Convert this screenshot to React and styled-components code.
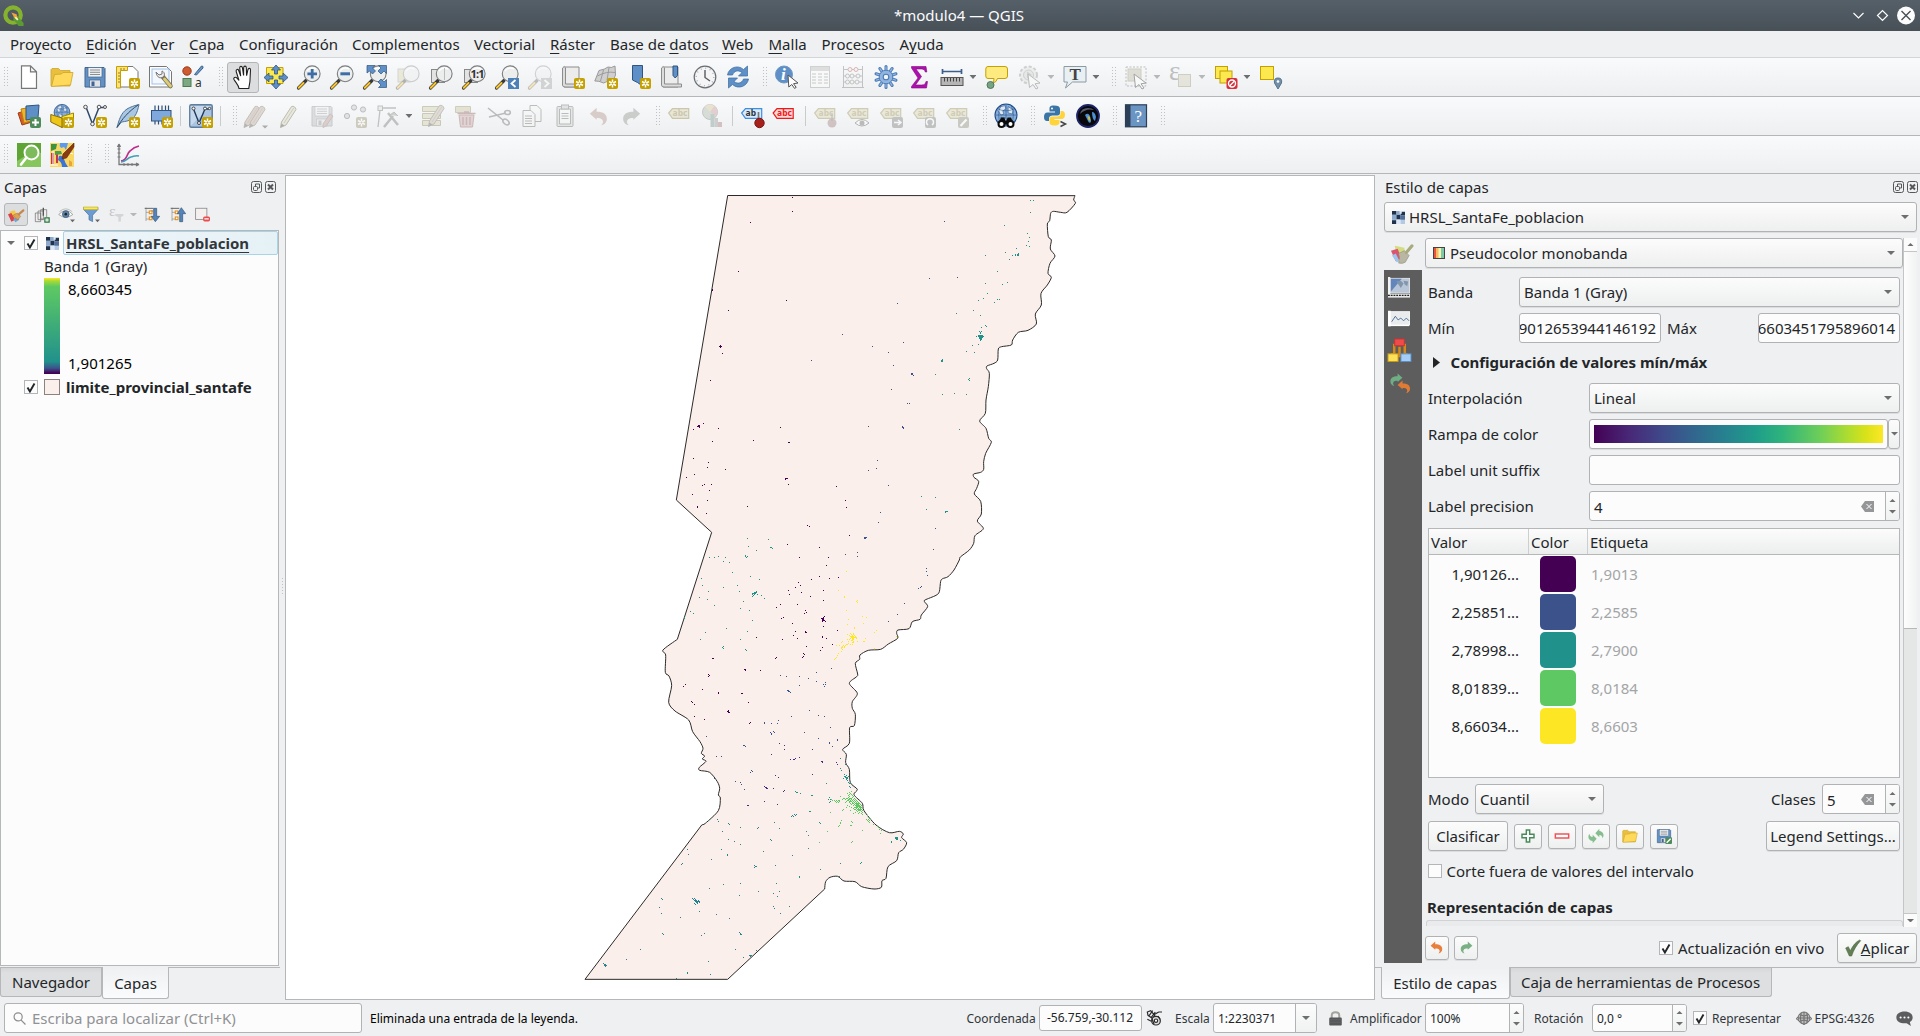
import React from "react";
import styled, { createGlobalStyle, css } from "styled-components";

const Global = createGlobalStyle`
  * { box-sizing: border-box; }
  html, body { margin: 0; padding: 0; background: #eff0f1; overflow: hidden; }
  body { font-family: "Noto Sans", "Open Sans", sans-serif; font-size: 15px; line-height: 20px; color: #232629; }
`;

/* ---------- window frame ---------- */

const Window = styled.div`
  width: 1920px;
  height: 1036px;
  display: flex;
  flex-direction: column;
  background: #eff0f1;
  white-space: nowrap;
  cursor: default;
`;

const TitleBar = styled.header`
  height: 31px;
  flex: none;
  display: grid;
  grid-template-columns: 1fr auto 1fr;
  align-items: center;
  padding: 0 5px 1px 3px;
  color: #fcfcfc;
  background: linear-gradient(#566069, #475057);
`;

const WindowButtons = styled.div`
  justify-self: end;
  display: flex;
  align-items: center;
`;

const MenuBar = styled.nav`
  height: 27px;
  flex: none;
  display: flex;
  align-items: center;
  padding-left: 10px;
  border-bottom: 1px solid #d3d5d6;
`;

const MenuEntry = styled.span`
  width: ${(p) => p.$w}px;
  u { text-underline-offset: 3px; text-decoration-thickness: 1px; text-decoration-skip-ink: none; }
`;

/* ---------- toolbars ---------- */

const ToolBar = styled.div`
  height: ${(p) => p.$h || 39}px;
  flex: none;
  display: flex;
  align-items: center;
  border-bottom: 1px solid #b4b6b8;
  background: linear-gradient(#f9fafb, #eeeff0);
`;

const GripSlot = styled.span`
  width: ${(p) => p.$w || 15.5}px;
  flex: none;
  display: flex;
  justify-content: ${(p) => (p.$first ? "center" : "flex-end")};
  padding-right: ${(p) => (p.$first ? 0 : 3)}px;
`;

const ToolSlot = styled.span`
  width: ${(p) => (p.$menu ? 45 : 33)}px;
  flex: none;
  display: flex;
  align-items: center;
  padding-left: ${(p) => (p.$active ? 1 : 4.5)}px;
`;

const ActiveTool = styled.span`
  width: 32px;
  height: 31px;
  display: grid;
  place-items: center;
  border: 1px solid #b3b5b6;
  border-radius: 3px;
  background: #dcddde;
`;

const ToolSep = styled.span`
  width: 7px;
  flex: none;
  height: 20px;
  display: flex;
  justify-content: center;
  &::after { content: ""; width: 1px; background: #c9cbcc; }
`;

/* ---------- panels ---------- */

const Main = styled.div`
  flex: none;
  height: 826px;
  display: flex;
`;

const LeftDock = styled.aside`
  width: 280px;
  flex: none;
  display: flex;
  flex-direction: column;
`;

const DockTitle = styled.div`
  height: 28px;
  flex: none;
  display: flex;
  align-items: center;
  gap: 3px;
  padding: 0 ${(p) => p.$r || 3}px 2px ${(p) => p.$l || 4}px;
  span { flex: 1; }
`;

const LayerTools = styled.div`
  height: 28px;
  flex: none;
  display: flex;
  align-items: flex-start;
  padding: 1px 0 0 4px;
`;

const LayerTool = styled.span`
  width: ${(p) => p.$w || 25}px;
  height: 23px;
  display: flex;
  align-items: center;
  justify-content: center;
`;

const LayerToolOn = styled(LayerTool)`
  width: 24px;
  margin-right: 1px;
  border: 1px solid #b3b5b6;
  border-radius: 3px;
  background: #dcddde;
`;

const Tree = styled.div`
  height: 736px;
  flex: none;
  display: flex;
  flex-direction: column;
  width: 279px;
  border: 1px solid #b5b7b9;
  background: #fcfcfc;
`;

const LayerRow = styled.div`
  height: ${(p) => p.$h || 24}px;
  flex: none;
  display: flex;
  align-items: center;
  font-weight: bold;
`;

const Expander = styled.span`
  width: 23px;
  display: flex;
  align-items: center;
  padding-left: 6px;
`;

const LayerIcon = styled.span`
  width: 19px;
  margin-left: 6px;
  display: flex;
  align-items: center;
  padding-left: ${(p) => p.$l || 0}px;
`;

const SelectedName = styled.span`
  flex: 1;
  height: 24px;
  line-height: 23px;
  padding-left: 2px;
  border: 1px solid #a9d3e6;
  border-radius: 2px;
  background: linear-gradient(90deg, #edf5f9, #e6f1f6);
  color: #31363b;
  text-decoration: underline;
  text-underline-offset: 3px;
  text-decoration-thickness: 1px;
  text-decoration-skip-ink: none;
`;

const LayerName = styled.span`
  padding-left: 3px;
`;

const BandName = styled.div`
  height: 23px;
  line-height: 23px;
  padding-left: 43px;
  flex: none;
`;

const Legend = styled.div`
  display: flex;
  height: 96px;
  flex: none;
  padding-left: 43px;
`;

const LegendRamp = styled.div`
  width: 16px;
  background: linear-gradient(#fde725 0%, #a8db34 3%, #5ec962 9%, #21918c 87%, #3b528b 94%, #440154 99%);
`;

const LegendLabels = styled.div`
  display: flex;
  flex-direction: column;
  justify-content: space-between;
  padding: 1px 0 1px 8px;
  color: #000;
`;

const Swatch = styled.span`
  width: 16px;
  height: 16px;
  border: 1px solid #8b8280;
  background: #faefea;
`;

const Tabs = styled.div`
  display: flex;
  align-items: flex-start;
  margin-top: ${(p) => p.$mt}px;
  border-top: 1px solid #b5b7b9;
  padding-left: ${(p) => p.$l || 0}px;
  height: 32px;
`;

const Tab = styled.span`
  width: ${(p) => p.$w}px;
  text-align: center;
  border: 1px solid #b5b7b9;
  border-top: 0;
  border-radius: 0 0 3px 3px;
  ${(p) =>
    p.$on
      ? css`
          height: 32px;
          line-height: 33px;
          margin-top: -1px;
          background: linear-gradient(#eff0f1, #fafbfc);
        `
      : css`
          height: 29px;
          line-height: 29px;
          background: linear-gradient(#d5d6d8 0, #dddfe0 5px);
        `}
`;

const Splitter = styled.div`
  width: 5px;
  flex: none;
  display: flex;
  align-items: center;
  justify-content: center;
`;

const Canvas = styled.main`
  width: 1090px;
  height: 825px;
  margin-top: 1px;
  flex: none;
  border: 1px solid #b5b7b9;
  background: #fff;
  svg { display: block; }
`;

/* ---------- form controls ---------- */

const frame = css`
  border: 1px solid #b0b2b4;
  border-radius: 3px;
`;

const Combo = styled.div`
  ${frame}
  width: ${(p) => p.$w}px;
  height: 30px;
  flex: none;
  display: flex;
  align-items: center;
  gap: 4px;
  padding: 0 7px 0 ${(p) => p.$pl || 4}px;
  margin-left: ${(p) => p.$ml || 0}px;
  background: linear-gradient(#fcfcfc, #eeefef);
  box-shadow: 0 1px 0 #dcdddf;
  span { flex: 1; }
`;

const Field = styled.div`
  ${frame}
  width: ${(p) => p.$w}px;
  height: ${(p) => p.$h || 30}px;
  flex: none;
  display: flex;
  align-items: center;
  overflow: hidden;
  padding: 0 ${(p) => p.$pr || 4}px 0 ${(p) => p.$pl || 0}px;
  justify-content: ${(p) => (p.$end ? "flex-end" : "flex-start")};
  background: #fcfcfc;
  color: ${(p) => (p.$muted ? "#909294" : "#232629")};
`;

const SpinBox = styled(Field)`
  padding: 0 0 0 ${(p) => p.$pl || 4}px;
  & > span { flex: 1; padding-top: 1px; }
`;

const SpinArrows = styled.div`
  width: ${(p) => p.$w || 14}px;
  height: 100%;
  margin-left: ${(p) => p.$ml || 0}px;
  display: flex;
  flex-direction: column;
  align-items: center;
  justify-content: center;
  gap: 8px;
  border-left: 1px solid #b0b2b4;
  background: linear-gradient(#fcfcfc, #f0f1f1);
`;

const Button = styled.div`
  ${frame}
  width: ${(p) => p.$w}px;
  height: ${(p) => p.$h || 30}px;
  flex: none;
  display: flex;
  align-items: center;
  justify-content: center;
  background: linear-gradient(#fcfcfc, #eeefef);
  box-shadow: 0 1px 0 #dcdddf;
`;

const Box = styled.span`
  width: 14px;
  height: 14px;
  flex: none;
  display: grid;
  place-items: center;
  margin-left: ${(p) => p.$ml || 0}px;
  border: 1px solid #b3b5b6;
  background: #fcfcfc;
`;

/* ---------- style dock ---------- */

const RightDock = styled.aside`
  flex: 1;
  display: flex;
  flex-direction: column;
`;

const StyleBody = styled.div`
  display: flex;
  height: 725px;
  margin: 6px 0 0 9px;
`;

const StyleSide = styled.div`
  width: 38px;
  margin-right: 3px;
  display: flex;
  flex-direction: column;
`;

const SideFirst = styled.div`
  height: 32px;
  padding: 4px 0 0 6px;
`;

const SideDark = styled.div`
  flex: 1;
  display: flex;
  flex-direction: column;
  padding: 7px 0 0 4px;
  background: #5d5d5d;
  gap: 9px;
`;

const StyleColumn = styled.div`
  width: 492px;
  display: flex;
  flex-direction: column;
`;

const ScrollArea = styled.div`
  height: 689px;
  display: flex;
`;

const Form = styled.div`
  width: 478px;
  display: flex;
  flex-direction: column;
`;

const FormRow = styled.div`
  display: flex;
  align-items: center;
  margin: ${(p) => p.$mt}px 3px 0 3px;
  height: ${(p) => p.$h || 30}px;
  flex: none;
`;

const BoldRow = styled(FormRow)`
  font-weight: bold;
  padding-bottom: 2px;
  margin-left: ${(p) => p.$l || 3}px;
`;

const Label = styled.label`
  width: ${(p) => p.$w}px;
  flex: none;
  padding-left: ${(p) => p.$l || 0}px;
`;

const Fill = styled.span`
  flex: 1;
  padding-left: ${(p) => p.$l || 0}px;
`;

const RampField = styled(Button)`
  padding: 5px 4px;
  background: #fcfcfc;
`;

const Ramp = styled.div`
  width: 100%;
  height: 18px;
  background: linear-gradient(90deg, #440154, #482777 12%, #3f4a8a 24%, #31678e 35%, #26838f 46%, #1f9d8a 56%, #2eb37c 65%, #6cce5a 78%, #b6de2b 89%, #d8e219 94%, #fde725);
`;

const ClassTable = styled.div`
  margin: 7px 3px 0;
  height: 250px;
  flex: none;
  border: 1px solid #b5b7b9;
  background: #fcfcfc;
`;

const ClassGrid = styled.div`
  display: grid;
  grid-template-columns: 100px 59px 1fr;
  align-items: center;
`;

const ClassHead = styled(ClassGrid)`
  height: 26px;
  background: linear-gradient(#fcfcfc, #eceded);
  border-bottom: 1px solid #b5b7b9;
  span { line-height: 27px; height: 25px; padding-left: 2px; border-right: 1px solid #ccced0; }
  span:last-child { border: 0; }
`;

const ClassRow = styled(ClassGrid)`
  height: 38px;
  span:first-child { text-align: right; padding-right: 10px; }
  span:last-child { color: #a3a5a7; padding-left: 3px; }
`;

const ClassColor = styled.i`
  width: 36px;
  height: 36px;
  margin: 0 0 0 11px;
  border-radius: 5px;
  background: ${(p) => p.$c};
`;

const ButtonRow = styled(FormRow)`
  gap: 6px;
`;

const GroupTop = styled.div`
  height: 6px;
  margin: 1px 0 0 1px;
  border: 1px solid #d0d2d3;
  border-bottom: 0;
  border-radius: 3px 3px 0 0;
  background: #eaebec;
`;

const ScrollBar = styled.div`
  width: 14px;
  display: flex;
  flex-direction: column;
  border-left: 1px solid #c3c5c6;
  background: #e5e7e7;
`;

const ScrollButton = styled.div`
  height: 14px;
  display: grid;
  place-items: center;
  background: #fbfbfb;
  border-bottom: ${(p) => (p.$up ? "1px solid #c3c5c6" : 0)};
  border-top: ${(p) => (p.$up ? 0 : "1px solid #c3c5c6")};
`;

const ScrollHandle = styled.div`
  height: 377px;
  margin-bottom: auto;
  border-bottom: 1px solid #b5b7b9;
  background: linear-gradient(90deg, #fdfdfd, #f1f2f2);
`;

const StyleFooter = styled.div`
  height: 36px;
  display: flex;
  align-items: center;
  gap: 5px;
  padding-top: 6px;
`;

/* ---------- status bar ---------- */

const StatusBar = styled.footer`
  height: 36px;
  display: flex;
  align-items: center;
  padding-left: 4px;
  font-size: 12px;
`;

const StatusText = styled.span`
  width: ${(p) => p.$w}px;
  flex: none;
  padding-left: ${(p) => p.$l || 0}px;
  padding-top: ${(p) => p.$t || 0}px;
  color: ${(p) => (p.$dark ? "#000" : "#31363b")};
  svg { display: block; }
`;

const Locator = styled(Field)`
  font-size: 15px;
  gap: 6px;
`;

/* ---------- small glyphs ---------- */

const Tri = ({ up, s = 8, c = "#6c6e70" }) => (
  <svg width={s} height={s / 2} viewBox="0 0 8 4">
    <path d={up ? "M0 4h8L4 0z" : "M0 0h8L4 4z"} fill={c} />
  </svg>
);

const Grip = ({ h = 21, one }) => (
  <svg width={one ? 1 : 4} height={h} shapeRendering="crispEdges">
    {Array.from({ length: Math.ceil(h / 3) }, (_, i) => (
      <g key={i} fill="#bfc1c2">
        <rect x="0" y={i * 3} width="1" height="1" />
        {!one && <rect x="3" y={i * 3} width="1" height="1" />}
      </g>
    ))}
  </svg>
);

const Check = () => (
  <svg width="10" height="11" viewBox="0 0 10 11">
    <path d="M1.500 5.500l2.400 4L8.500 1.500" fill="none" stroke="#232629" strokeWidth="1.900" />
  </svg>
);

const Clear = () => (
  <svg width="13" height="11" viewBox="0 0 13 11">
    <path d="M4 0h9v11H4L0 5.500z" fill="#949698" />
    <path d="M5.500 3l5 5M10.500 3l-5 5" stroke="#fff" strokeWidth="1" />
  </svg>
);

const Float = () => (
  <svg width="11" height="12" viewBox="0 0 11 12" fill="none" stroke="#55585b">
    <rect x=".5" y=".5" width="10" height="11" rx="2" />
    <path d="M4.500 5V3h4v4h-2" />
    <rect x="2.500" y="5.500" width="4" height="4" rx="1" />
  </svg>
);

const Close = () => (
  <svg width="11" height="12" viewBox="0 0 11 12" fill="none" stroke="#55585b">
    <rect x=".5" y=".5" width="10" height="11" rx="2" />
    <path d="M3 3.500l5 5M8 3.500l-5 5" strokeWidth="2" />
  </svg>
);

const Spin = ({ ml }) => (
  <SpinArrows $ml={ml}>
    <Tri up s={7} />
    <Tri s={7} />
  </SpinArrows>
);

/* ---------- toolbar icons, drawn on a 24 by 24 grid ---------- */

const badge = (bg = "#c4a000") => (
  <g>
    <rect x="13" y="13" width="11" height="11" rx="2" fill={bg} />
    <path d="M18.500 14.500v8M15 16.500l7 4M22 16.500l-7 4" stroke="#fff" strokeWidth="1.500" />
    <circle cx="18.500" cy="18.500" r="1" fill={bg} />
  </g>
);
const star = badge();

const lens = (
  <g>
    <path d="M1.500 23L9 15.500" stroke="#3a3a3a" strokeWidth="3.200" strokeLinecap="round" />
    <path d="M1.800 22.700L6.500 18" stroke="#fcc629" strokeWidth="2" strokeLinecap="round" />
    <circle cx="15.200" cy="8.800" r="7.900" fill="#eceded" stroke="#7b7d7e" strokeWidth="1.100" />
    <path d="M10 6a6.500 6.500 0 0 1 9-2" stroke="#fff" strokeWidth="1.500" fill="none" />
  </g>
);

const disk = (body, edge, line) => (
  <g>
    <path d="M2 2.500h19l1 1V22H2z" fill={body} stroke={edge} />
    <rect x="5" y="2.500" width="14" height="9.500" fill="#eef0f2" stroke={edge} strokeWidth=".7" />
    <path d="M7 5h10M7 7.300h10M7 9.500h10" stroke={line} />
    <rect x="6.500" y="15" width="11" height="7" fill="#dfe3e8" stroke={edge} strokeWidth=".7" />
    <rect x="8.500" y="16.500" width="3" height="4.500" fill={edge} />
  </g>
);
const flop = disk("#6291c6", "#42658f", "#8b8d8f");
const folder = (
  <g stroke="#caa62d" strokeWidth=".8">
    <path d="M1 21V4.500l1-1h6.500l2 2H20V21z" fill="#e9bf3d" />
    <path d="M1.500 21.500L4.500 9.500l7-.5 1.500-1.500h10L20.500 20l-7 .5z" fill="#ffd95c" />
  </g>
);
const pencil = (fill = "#d3cca4", tip = "#6b6b60") => (
  <g>
    <path d="M4.500 18L14.500 2.500q3.500-1 4.500 3L9 21l-5.500 2.500z" fill={fill} stroke="#85836f" />
    <path d="M7 19L17 3.500" stroke="#a5a188" />
    <path d="M4.500 19.500l3 2-4 2z" fill={tip} />
  </g>
);
const abcTag = (c = "#a39a66", f = "#ddd9b8", t = "abc", ink = c) => (
  <g transform="translate(0 4)">
    <path d="M.7 5L4.500.6h16.200v9.800H4.500z" fill={f} stroke={c} strokeWidth="1.200" />
    <text x="4.600" y="8.300" fontFamily="Noto Sans" fontSize="8.500" fontWeight="bold" fill={ink}>{t}</text>
  </g>
);
const sq = (x, y, s, f = "#fce94f", c = "#c4a000") => <rect x={x} y={y} width={s} height={s} fill={f} stroke={c} />;
const curl = (f) => <path d="M1 8l8-7v4.500c8 0 12 3 12 8.500 0 4-3 6.500-6.500 7.500 2-2.500 2.500-4 1.500-6-1-1.800-3-2.500-7-2.500V15z" fill={f} />;
const cursor = <path d="M10 9l12 9-5 .8 3 4.200-2 1-3-4.500-3.500 3z" fill="#fff" stroke="#555" />;
const paper = (
  <g>
    <path d="M3 2h15v20H3z" fill="#ececec" stroke="#8c8c8c" />
    <path d="M1.500 3q2-3 3 0v16h17v3H4q-2.500 0-2.500-2z" fill="#dcdcdc" stroke="#8c8c8c" />
  </g>
);
const earth = (
  <g>
    <circle cx="12" cy="11" r="10.500" fill="#86aedb" stroke="#204a87" />
    <path d="M4 6q3-4 7-4l1 3-3 2 1 3-3 1zM14 3l5 3-1 4-4-1zM7 13l5 1 1 4-3 2z" fill="#dbe7f3" stroke="#35608f" strokeWidth=".6" />
    <path d="M2 11h20M12 1v20M4 5q8 4 16 0M7 2q-4 9 0 18M17 2q4 9 0 18" stroke="#204a87" strokeWidth=".5" fill="none" />
  </g>
);

const I = {
  new: <path d="M4.500 .8h9l6 6v16.500h-15z M13.500 .8v6h6" fill="#fff" stroke="#777" strokeWidth="1.200" />,
  open: folder,
  save: flop,
  layoutNew: (
    <g>
      <path d="M4 1.500h13l5 5V22H4z" fill="#fff" stroke="#777" />
      <path d="M.5 1.500h11v4h-7V23h-4z" fill="#fbe27a" stroke="#c4a000" />
      <path d="M2 8h2M2 11h2M2 14h2M2 17h2M5 3v2M8 3v2" stroke="#9c8200" />
      {star}
    </g>
  ),
  layouts: (
    <g>
      <path d="M.5 1.500h17l5 5V22H.5z" fill="#fff" stroke="#777" />
      <rect x="3" y="4" width="17" height="15" fill="#f4f8fd" stroke="#9fc0ea" />
      <path d="M14 12l7.500 9" stroke="#7d7450" strokeWidth="4.500" strokeLinecap="round" />
      <path d="M15.500 14l6 7" stroke="#dccb7b" strokeWidth="2.800" strokeLinecap="round" />
      <path d="M7 7l3 3 3-1 0-3c3 1 3 5 1 6-2 1.500-6 1.500-7-5z" fill="#eee" stroke="#777" />
    </g>
  ),
  styleMgr: (
    <g>
      <circle cx="5" cy="6" r="4.200" fill="#cf5b31" stroke="#9c3b18" />
      <path d="M12.500 9.500L19.500 1q2-.3 1.500 2L14.500 10z" fill="#6d97c4" stroke="#3a6491" />
      <rect x="1" y="13.500" width="8" height="8" fill="#7da982" stroke="#4d7a52" />
      <text x="13" y="22" fontFamily="Noto Sans" fontSize="12" fill="#333">a</text>
    </g>
  ),
  hand: (
    <path d="M8 23.500C7.500 20 5 18 3 14.500 2 12.500 4.500 11.500 6 13.200L8 15.500 5.200 6.500C4.700 4.300 7 3.700 7.700 5.500L9.700 11 8.700 3C8.600 1 11 .8 11.400 2.700L12.600 10.500 12.700 2.500C12.900.6 15.200.7 15.300 2.700L15.600 10.700 17 4.500C17.500 2.700 19.700 3.200 19.500 5L19 15C19 18.500 18 20.500 17.800 23.500z" fill="#fff" stroke="#222" strokeWidth="1.100" />
  ),
  pan: (
    <g>
      <path d="M2.500 2.500H19v16H2.500z" fill="#fce94f" stroke="#c4a000" />
      <g fill="#5e8fc6" stroke="#2f5580" strokeWidth=".8">
        <path d="M12 0l4.500 5H13.500v4h-3V5H7.500z" />
        <path d="M12 24l4.500-5H13.500v-4h-3v4H7.500z" />
        <path d="M0 12.500l5-4.500v3h4v3H5v3z" />
        <path d="M24 12.500L19 8v3h-4v3h4v3z" />
      </g>
    </g>
  ),
  zoomIn: <g>{lens}<path d="M15.200 4v9.600M10.400 8.800h9.600" stroke="#3e6ea5" strokeWidth="2.800" /></g>,
  zoomOut: <g>{lens}<path d="M10.400 8.800h9.600" stroke="#3e6ea5" strokeWidth="3" /></g>,
  zoomFull: (
    <g>
      {lens}
      <g fill="#5e8fc6" stroke="#2f5580" strokeWidth=".7">
        <path d="M4 .5h8L9.500 3l3 3-3 3-3-3L4 8z" />
        <path d="M23.500 .5v8L21 6l-3 3-3-3 3-3L15.500.5z" />
        <path d="M23.500 22.500h-8L18 20l-3-3 3-3 3 3 2.500-2.500z" />
      </g>
    </g>
  ),
  zoomSel: <g opacity=".35"><rect x="2" y="4" width="12" height="13" fill="#d7d3a0" stroke="#999" />{lens}</g>,
  zoomLayer: <g><rect x="2.500" y="4.500" width="13" height="13" fill="#e3e3e3" stroke="#888" />{lens}<path d="M15.500 3v12" stroke="#bbb" /></g>,
  zoomOne: (
    <g>
      <rect x="2.500" y="4.500" width="13" height="13" fill="#e3e3e3" stroke="#888" />
      {lens}
      <text x="8.500" y="13" fontFamily="Noto Sans" fontSize="11" fontWeight="bold" fill="#333" textLength="14">1:1</text>
    </g>
  ),
  zoomLast: <g>{lens}<rect x="13" y="13" width="11" height="11" fill="#4e80b8" /><path d="M20.500 15l-4 3.500 4 3.500" stroke="#fff" strokeWidth="1.800" fill="none" /></g>,
  zoomNext: <g opacity=".3">{lens}<rect x="13" y="13" width="11" height="11" fill="#8a8a8a" /><path d="M16.500 15l4 3.500-4 3.500" stroke="#fff" strokeWidth="1.800" fill="none" /></g>,
  mapNew: <g>{paper}{star}</g>,
  map3d: <g><path d="M.8 16L5 5.500q6-1 9-3.500 3 1.500 7-1l.5 9q-2 3-1 6-7-1-11 2-5-2.500-8.700-2z" fill="#cfcfcf" stroke="#999" /><path d="M3.500 11q9-5 17.500-3.500M9.500 5l-3 11M15 2.500l-2 13" stroke="#9c9c9c" fill="none" />{star}</g>,
  bookNew: <g><path d="M5.500 .5h10V21l-5-3.500-5-2.500z" fill="#5e8fc6" stroke="#2f5580" />{star}</g>,
  books: <g>{paper}<path d="M13 1h4.500V10.500L15.200 13 13 10.500z" fill="#5e8fc6" stroke="#2f5580" /></g>,
  clock: (
    <g>
      <circle cx="12" cy="12" r="10.800" fill="#f5f5f5" stroke="#6b6d6e" strokeWidth="1.200" />
      <circle cx="12" cy="12" r="8.800" fill="none" stroke="#9cb8d8" strokeDasharray="1 3.600" strokeWidth="1.500" />
      <path d="M12 5v7.500l5 3.500" fill="none" stroke="#5a5c5e" strokeWidth="1.400" />
    </g>
  ),
  refresh: (
    <g fill="#5e8fc6" stroke="#3a6aa0" strokeWidth=".7">
      <path d="M1.500 10c1-7 10-11 16-5.500L21.500 1v10h-9l3.500-3.500C12 4.500 8 6 6.500 10z" />
      <path d="M22.500 14c-1 7-10 11-16 5.500L2.500 23V13h9L8 16.500c4 3 8 1.500 9.500-2.500z" />
    </g>
  ),
  identify: (
    <g>
      <circle cx="9" cy="9.500" r="8.500" fill="#5e8fc6" stroke="#6d97c4" />
      <text x="6" y="15" fontFamily="Liberation Serif" fontSize="17" fontWeight="bold" fontStyle="italic" fill="#fff">i</text>
      <path d="M13 10l10 8-4.500.7 2.700 3.700-1.700 1-2.700-3.900-3 2.500z" fill="#fff" stroke="#555" />
    </g>
  ),
  table: (
    <g opacity=".4">
      <rect x="2.500" y="1.500" width="19" height="21" fill="#fff" stroke="#999" />
      <rect x="3" y="2" width="18" height="4" fill="#bbb" />
      <path d="M4 9h4M10 9h4M16 9h4M4 12h4M10 12h4M16 12h4M4 15h4M10 15h4M16 15h4M4 18h4M10 18h4M16 18h4" stroke="#888" />
    </g>
  ),
  abacus: (
    <g opacity=".45" fill="none" stroke="#888">
      <path d="M2.500 1v22M21.500 1v22M2.500 4.500h19M2.500 11h19M2.500 17h19M1 22.500h22" />
      <g fill="#f3f3f3"><circle cx="9" cy="4.500" r="2" stroke="#b66" /><circle cx="15" cy="4.500" r="2" stroke="#b66" /><circle cx="6.500" cy="11" r="2" /><circle cx="11" cy="11" r="2" /><circle cx="17" cy="11" r="2" /><circle cx="6.500" cy="17" r="2" /><circle cx="11" cy="17" r="2" /><circle cx="16" cy="17" r="2" /></g>
    </g>
  ),
  gear: (
    <g>
      {Array.from({ length: 10 }, (_, i) => <path key={i} d="M12 1.500v5" stroke="#4a7ab5" strokeWidth="3" strokeLinecap="round" transform={`rotate(${i * 36} 12 12)`} />)}
      {Array.from({ length: 10 }, (_, i) => <path key={i} d="M12 1.800v5" stroke="#8fb4e0" strokeWidth="1.300" strokeLinecap="round" transform={`rotate(${i * 36} 12 12)`} />)}
      <circle cx="12" cy="12" r="6.800" fill="#8fb4e0" stroke="#4a7ab5" strokeWidth=".9" />
      <circle cx="12" cy="12" r="2.800" fill="#f3f6f9" stroke="#4a7ab5" strokeWidth="1.100" />
    </g>
  ),
  sigma: <path d="M4.500 1.500h14.500l.8 5.500h-1.500c-.5-2-1.500-3-4-3H9l5.500 7.500L8.500 20h6c3 0 4-1 4.500-3.500h1.500l-1 6.500h-15v-1.500L11 13 4.500 3z" fill="#b00fb0" stroke="#7d0a7d" strokeWidth=".6" />,
  measure: (
    <g>
      <path d="M2.500 6.500h19M2.500 4v5M21.500 4v5" stroke="#3b5f8a" strokeWidth="1.700" />
      <rect x="1" y="12.500" width="22" height="8" fill="#b5b5b5" stroke="#555" />
      <path d="M4.500 13v3.500M7.500 13v3.500M10.500 13v3.500M13.500 13v3.500M16.500 13v3.500M19.500 13v3.500" stroke="#444" />
    </g>
  ),
  tip: (
    <g>
      <path d="M3 1.500h17q2.500 0 2.500 2.500v7q0 2.500-2.500 2.500h-7.500Q12 17 7 18.500q2.500-2.500 2-5H3Q.8 13.500.8 11V4Q.8 1.500 3 1.500z" fill="#fdeb80" stroke="#c4a000" />
      <circle cx="5.500" cy="20" r="3.500" fill="#77a382" stroke="#4f7a5a" />
    </g>
  ),
  action: <g opacity=".35"><circle cx="10.500" cy="10" r="8.500" fill="#ddd" stroke="#888" strokeWidth="2" strokeDasharray="3 2" /><circle cx="10.500" cy="10" r="5" fill="#ccc" stroke="#888" /><path d="M9 6.500l5 3.500-5 3.500z" fill="#888" />{cursor}</g>,
  text: (
    <g>
      <path d="M1 1.500h22v15.500H9.500L2.500 23l2-6H1z" fill="#e8f0f4" stroke="#8b9aa3" />
      <text x="6.500" y="15" fontFamily="Liberation Serif" fontSize="17" fontWeight="bold" fill="#444">T</text>
    </g>
  ),
  select: <g opacity=".5"><rect x="2" y="2" width="20" height="19" fill="none" stroke="#888" strokeDasharray="2 1.500" /><rect x="4" y="4" width="13" height="12" fill="#c9c7b6" stroke="#aaa88f" />{cursor}</g>,
  epsilon: <g opacity=".5"><text x="0" y="15" fontFamily="Liberation Serif" fontSize="27" fill="#888">ε</text><rect x="9.500" y="9.500" width="12" height="12" fill="#d9d7c5" stroke="#aaa88f" /></g>,
  deselect: (
    <g>
      {sq(1.500, 1.500, 12)}
      {sq(6, 6, 12)}
      <rect x="12.500" y="13" width="11" height="11" rx="2" fill="#d6303c" />
      <circle cx="18" cy="18.500" r="3.500" fill="none" stroke="#fff" strokeWidth="1.400" />
      <path d="M15.800 20.800l4.500-4.500" stroke="#fff" strokeWidth="1.300" />
    </g>
  ),
  location: (
    <g>
      {sq(1.500, 1.500, 13)}
      <path d="M19 24l-3.500-6q-1-5 3.500-5t3.500 5z" fill="#7390a8" stroke="#56748d" />
      <circle cx="19" cy="16.500" r="1.300" fill="#fff" />
    </g>
  ),
  addSource: (
    <g>
      <path d="M1 9l10-3 4 12-10 3z" fill="#d95b2c" stroke="#a03f18" />
      <path d="M4 5l11-2 2 13-10 3z" fill="#f0b429" stroke="#b98308" />
      <path d="M9 2l13-1-1 13-12 2z" fill="#5e8fc6" stroke="#2f5580" />
      <rect x="13" y="13" width="11" height="11" rx="2" fill="#4f8a5b" />
      <path d="M18.500 15v7M15 18.500h7" stroke="#fff" strokeWidth="2" />
    </g>
  ),
  gpkg: (
    <g>
      <g transform="translate(3 0) scale(.75)">{earth}</g>
      <path d="M12 12.500L23.500 9v9L12 23.500z" fill="#fce94f" stroke="#a68500" />
      <path d="M.8 10.500L12 14v9.500L.8 18z" fill="#eec61a" stroke="#8a6d00" />
      {star}
    </g>
  ),
  vector: (
    <g>
      <path d="M3 3l6.500 17L16 3.500h6" fill="none" stroke="#2d4a6b" strokeWidth="1.500" />
      <g fill="#f4f4f4" stroke="#555"><circle cx="2.500" cy="3" r="1.800" /><circle cx="9.500" cy="20" r="1.800" /><circle cx="16" cy="3" r="1.800" /><circle cx="22" cy="3" r="1.500" /></g>
      {star}
    </g>
  ),
  feather: (
    <g>
      <path d="M1 23.500C3 16 5 9 11 5c3-2 8-3.500 12-4.500-1 4-1.500 8-4.500 12C15 17 9 17.500 5.500 18z" fill="#a9c6e2" stroke="#4f7396" />
      <path d="M1 23.500C6 15 12 8 22 1" stroke="#2c4c70" fill="none" />
      {star}
    </g>
  ),
  chip: (
    <g>
      <path d="M6 1.500v19M9.500 1.500v19M13 1.500v19M16.500 1.500v19M19.500 1.500v19" stroke="#2f4f78" strokeWidth="1.200" />
      <rect x="2.500" y="6.500" width="19.500" height="10.500" fill="#7fa9dc" stroke="#2f5580" />
      {star}
    </g>
  ),
  vlayer: (
    <g>
      <rect x=".8" y=".8" width="22.400" height="22.400" rx="1.500" fill="#a9c3e0" stroke="#5f7d9e" strokeWidth="1.500" />
      <path d="M1.500 2v20L22 2z" fill="#dbe7f3" opacity=".6" />
      <path d="M4.500 5l5.500 14L16 5h4" fill="none" stroke="#1f3a5c" strokeWidth="1.400" />
      <g fill="#fff" stroke="#444"><circle cx="4.500" cy="4.500" r="1.500" /><circle cx="10" cy="19" r="1.500" /><circle cx="16" cy="4.500" r="1.500" /><circle cx="20.500" cy="4.500" r="1.200" /></g>
      {star}
    </g>
  ),
  edits: <g opacity=".45"><g transform="translate(-3.500 0)">{pencil("#c5aca4")}</g><g transform="translate(2 0)">{pencil("#c9b2aa")}</g><path d="M18 21.500h6l-3 3z" fill="#555" /></g>,
  pencil: <g opacity=".5">{pencil("#dedcc4")}</g>,
  saveEdits: <g opacity=".4">{disk("#b9bbbd", "#8c8e90", "#999")}<path d="M13 20L20 10l3 2-7 10-3 1.500z" fill="#bd9890" stroke="#8f7a74" /></g>,
  addPoint: <g opacity=".45"><circle cx="4" cy="12" r="2.600" fill="#ccc" stroke="#777" /><circle cx="11" cy="3.500" r="2.600" fill="#ccc" stroke="#777" /><circle cx="20" cy="5.500" r="2.600" fill="#ccc" stroke="#777" />{badge("#a19c7c")}</g>,
  vertex: <g opacity=".4" fill="none" stroke="#777"><path d="M6 4h14M4 6L2 23" strokeWidth="1.300" /><rect x="2" y="2" width="4.500" height="4.500" fill="#ddd" /><path d="M8 23L17 12M12 9l10 12" strokeWidth="2.500" /><path d="M14 11l4-3 4 4" fill="#999" /></g>,
  formEdit: <g opacity=".45"><path d="M1.500 2.500h18v5h-18zM1.500 9.500h18v5h-18zM1.500 16.500h18v5h-18z" fill="#d6d3b4" stroke="#99966f" /><g transform="translate(4 -1)">{pencil("#c9bdb0")}</g></g>,
  trash: <g opacity=".42"><path d="M1.500 2.500h15v6h-15z" fill="#c9c6a2" stroke="#99966f" /><path d="M5 11h15l-1.500 12h-12z" fill="#caa" stroke="#966" /><path d="M3.500 9.500h18M10 8h5M9 13v8M12.500 13v8M16 13v8" stroke="#966" strokeWidth="1.500" /></g>,
  cut: <g opacity=".45" fill="none" stroke="#777" strokeWidth="1.600"><path d="M1 4l15 12M2 13l17-4" /><ellipse cx="19" cy="18" rx="3.500" ry="2.300" transform="rotate(40 19 18)" /><ellipse cx="20.500" cy="8.500" rx="2.800" ry="2" /></g>,
  copy: <g opacity=".45" fill="#f6f6f6" stroke="#777"><path d="M10 1.500h7l4 4v12H10z" /><path d="M3 6.500h8l4 4v12H3z" /><path d="M5 12h7M5 14.500h7M5 17h7M5 19.500h7" /></g>,
  paste: <g opacity=".45" fill="#f6f6f6" stroke="#777"><rect x="4" y="2.500" width="16" height="20" rx="1" fill="#d5d5d5" /><path d="M6.500 5h11v15h-11z" /><rect x="8.500" y="1" width="7" height="4" fill="#ccc" /><path d="M8.500 9.500h7M8.500 12h7M8.500 14.500h7" /></g>,
  undo: <g transform="translate(3 3) scale(.85)" opacity=".6">{curl("#c5b0ab")}</g>,
  redo: <g transform="translate(22 3) scale(-.85 .85)" opacity=".6">{curl("#adb3ae")}</g>,
  abc: <g opacity=".5">{abcTag()}</g>,
  pie: <g opacity=".5"><circle cx="9" cy="8" r="7.500" fill="#b9c6b9" stroke="#999" /><path d="M9 8L4 2.500a7.500 7.500 0 0 1 9.500-.5z" fill="#d9cfa8" /><path d="M9 8l4.500-6a7.500 7.500 0 0 1 2 10z" fill="#d3a9a9" /><rect x="9.500" y="10" width="4" height="13" fill="#8fa9a3" /><rect x="13.500" y="14" width="3.500" height="9" fill="#a9a9a9" /><rect x="17" y="18" width="4" height="5" fill="#b98f8f" /></g>,
  abPin: <g>{abcTag("#3f8fe0", "#d9eafc", "ab", "#333")}<path d="M17.500 8v7" stroke="#777" strokeWidth="1.700" /><circle cx="18.500" cy="19" r="4.700" fill="#a6201c" stroke="#7b1512" /></g>,
  abcRed: <g transform="translate(-1.500 0)">{abcTag("#f01818", "#fbdada")}</g>,
  abcPin: <g opacity=".45">{abcTag()}<circle cx="18" cy="19" r="4.500" fill="#a88" /><path d="M18 9v8" stroke="#777" /></g>,
  abcEye: <g opacity=".45">{abcTag()}<path d="M8 19q7-7 14 0-7 6-14 0z" fill="#fff" stroke="#666" /><circle cx="15" cy="19" r="2.500" fill="#777" /></g>,
  abcMove: <g opacity=".45">{abcTag()}<rect x="12" y="13" width="11" height="11" rx="2" fill="#888" /><path d="M14 18.500h6M18 16l3 2.500-3 2.500" stroke="#fff" strokeWidth="1.500" fill="none" /></g>,
  abcTurn: <g opacity=".45">{abcTag()}<rect x="12" y="13" width="11" height="11" rx="2" fill="#888" /><path d="M15 21a3.500 3.500 0 1 1 4 0" stroke="#fff" strokeWidth="1.500" fill="none" /></g>,
  abcEdit: <g opacity=".45">{abcTag()}<rect x="12" y="13" width="11" height="11" rx="2" fill="#998" /><path d="M14.500 22l6-6.500" stroke="#fff" strokeWidth="2.200" /></g>,
  osm: (
    <g>
      <g transform="translate(-.6 -.5) scale(1.050)">{earth}</g>
      <path d="M7 13.500h3.500l.8 3h1.400l.8-3H17l3 7H4z" fill="#0b0b0b" />
      <circle cx="7.500" cy="20" r="3" fill="#fff" stroke="#0b0b0b" strokeWidth="2" />
      <circle cx="16.500" cy="20" r="3" fill="#fff" stroke="#0b0b0b" strokeWidth="2" />
    </g>
  ),
  python: (
    <g>
      <path d="M11 1.500c-4 0-4.500 1.500-4.500 3.500v2.500H12v1H4.500C2 8.500 1 10.500 1 13s1 4 3 4h2v-2.500c0-2 1.500-3 3.500-3h5c1.500 0 2.500-1 2.500-2.500V5c0-2.500-2-3.500-6-3.500z" fill="#3a75a8" />
      <circle cx="9" cy="4.500" r="1" fill="#fff" />
      <path d="M11.500 21.500c4 0 5-1.500 5-3.500v-2h-5v-1h7c2.500 0 3.500-2 3.500-4 0-2.500-1-4-3-4h-1.500v2.500c0 2-1.500 3-3.500 3h-5c-1.500 0-2.500 1-2.500 2.500V18c0 2.500 1.500 3.500 5 3.500z" fill="#ffd43b" />
      <path d="M17.500 17.500l5 2.500-5 2.500" stroke="#444" strokeWidth="1.500" fill="none" />
    </g>
  ),
  darkGlobe: (
    <g>
      <circle cx="12" cy="12" r="11" fill="#07070c" stroke="#1d2468" strokeWidth="1.800" />
      <path d="M4 10q1-6 8-6 4 0 6 2-8-2-14 4z" fill="#8d95ad" opacity=".6" />
      <path d="M9 11q3-3 5 1l1 6q-2 2-3-1zM16 8q3 0 4 5l-1 4q-3-2-3-9z" fill="#4d8fd0" />
      <path d="M11.500 12l2.500 1 .5 4-2-1z" fill="#c9c04a" />
    </g>
  ),
  help: (
    <g>
      <rect x="1.500" y=".8" width="21" height="22" fill="#6a94c2" stroke="#2b3f57" strokeWidth="1.200" />
      <rect x="1.500" y=".8" width="5" height="22" fill="#2b3f57" />
      <text x="10.500" y="17.500" fontFamily="Liberation Serif" fontSize="17" fill="#fff">?</text>
    </g>
  ),
  quick: (
    <g>
      <rect width="24" height="24" fill="#5fa536" />
      <path d="M0 24h24V10q-10-2-24 8z" fill="#86c65c" />
      <circle cx="14.500" cy="9.500" r="7" fill="#7dbb5c" stroke="#fff" strokeWidth="1.900" />
      <path d="M9.500 14.500L4 21.500" stroke="#fff" strokeWidth="2.600" strokeLinecap="round" />
    </g>
  ),
  osmDown: (
    <g>
      <rect width="24" height="24" fill="#f9d765" />
      <path d="M1 1h6l-1 5-5 2z" fill="#3c9440" />
      <path d="M10 0q-1 3 1 5l3-1 2 3 2-7z" fill="#5b9bee" />
      <path d="M9 13q4-1 5 3t4 8h-6q0-5-4-7z" fill="#3b74d8" />
      <path d="M1 10h3v11H1zM6 11h2v9H6z" fill="#c73450" />
      <path d="M5 8h6l1 3-7 1z" fill="#4aa04e" />
      <path d="M19 17l3 2v4h-3z" fill="#e8a53a" />
      <path d="M0 22h8M17 9l6 2M3 8v14" stroke="#fff" />
      <path d="M24 0L13 11l-1 5 4.500-1L24 4z" fill="#8a3a12" stroke="#5e2407" strokeWidth=".6" />
    </g>
  ),
  plot: (
    <g fill="none">
      <path d="M3 1v20.500h20M3 1L1.500 4M3 1l1.500 3M23 21.500l-3-1.500M23 21.500L20 23" stroke="#777" strokeWidth="1.300" />
      <path d="M1.500 6h3M1.500 10h3M1.500 14h3M8 20v3M12 20v3M16 20v3" stroke="#777" />
      <path d="M5 18C12 17 10 11 14 8c2-2 4-4 9-5" stroke="#bf2c8c" strokeWidth="1.700" />
      <path d="M5 19c5 0 6-4 10-5 3-.5 4-2 8-1" stroke="#3f9fb5" strokeWidth="1.500" />
    </g>
  ),
  brush: (
    <g>
      <path d="M2 7l8-2 5 11-8 4z" fill="#f6c945" />
      <path d="M0 11l5-2 6 10-6 3z" fill="#d8434e" />
      <path d="M8 18l6-3 3 4-6 4z" fill="#6fa3d8" />
      <path d="M8 12l6-3 5 5-4 5q-5-1-7-7z" fill="#dba35a" stroke="#9b6f35" strokeWidth=".7" />
      <path d="M16 11l7-6" stroke="#c6874a" strokeWidth="3.300" strokeLinecap="round" />
    </g>
  ),
  brushPale: (
    <g>
      <path d="M5 4l10 2 1 10-9 0z" fill="#d3dd80" />
      <path d="M1 9l7-2 4 10-6 3z" fill="#da5570" />
      <path d="M2 14l4-2 4 8-3 1z" fill="#9fc5ea" />
      <path d="M9 12l6-3 5 5-4 7q-3 2-7 1 2-4 0-10z" fill="#b9b7a4" stroke="#8f8d75" strokeWidth=".6" />
      <path d="M17 11l6-7" stroke="#a9ab7e" strokeWidth="3.300" strokeLinecap="round" />
    </g>
  ),
  addGroup: <g><path d="M2 9h8v13H2zM6 6h8v13H6zM10 4h9v14h-9z" fill="#eee" stroke="#666" /><path d="M14 1v12" stroke="#555" strokeWidth="2" /><rect x="15" y="15" width="9" height="9" rx="1.500" fill="#5b946a" /><path d="M19.500 17v5M17 19.500h5" stroke="#fff" strokeWidth="1.500" /></g>,
  eye: <g><path d="M1 12q10-11 20 0-10 8-20 0z" fill="#fff" stroke="#999" strokeWidth="1.200" /><path d="M2 8q9-8 18 0" fill="none" stroke="#aaa" /><circle cx="11" cy="11.500" r="4.800" fill="#5b83ad" stroke="#40576f" /><circle cx="11" cy="11.500" r="1.800" fill="#222" /><path d="M17 19h7l-3.500 4z" fill="#666" /></g>,
  funnel: <g><path d="M1 2h20v3l-7.500 8v9l-5-2.500V13L1 5z" fill="#6b9bd1" stroke="#44719e" /><rect x="1" y="1.500" width="20" height="3.500" fill="#ffe94d" stroke="#c9ae12" strokeWidth=".7" /><path d="M17 19h7l-3.500 4z" fill="#666" /></g>,
  epsFunnel: <g opacity=".5"><text x="0" y="15" fontFamily="Liberation Serif" fontSize="25" fill="#999">ε</text><path d="M10 11h13v3l-4 2v7h-4v-7l-5-2z" fill="#bbb" /></g>,
  expand: <g><path d="M3 1v20M3 8h5M3 18h5" stroke="#888" fill="none" /><path d="M1 2h13M10 6h4" stroke="#666" strokeWidth="1.500" /><g fill="#fff" stroke="#e8921c" strokeWidth="1.700"><rect x="8" y="6" width="4" height="4" /><rect x="8" y="15" width="4" height="4" /></g><path d="M14.500 2h4.500v12h4.500L17 22l-6-8h3.500z" fill="#5585b8" stroke="#30557f" /></g>,
  collapse: <g><path d="M3 1v20M3 8h5M3 18h5" stroke="#888" fill="none" /><path d="M1 2h13" stroke="#666" strokeWidth="1.500" /><g fill="#fff" stroke="#e8921c" strokeWidth="1.700"><rect x="8" y="6" width="4" height="4" /><rect x="8" y="15" width="4" height="4" /></g><path d="M14.500 22h4.500V10h4.500L17 1l-6 9h3.500z" fill="#5585b8" stroke="#30557f" /></g>,
  removeLayer: <g><rect x="1" y="2" width="18" height="18" fill="#f3f0ef" stroke="#888" strokeWidth="1.300" /><rect x="13" y="15" width="11" height="8" rx="2.500" fill="#ec4b50" /><path d="M15 19h7" stroke="#fff" strokeWidth="2" /></g>,
  raster: (
    <g>
      <rect width="24" height="24" fill="#b4cae4" />
      <path d="M0 0h8v7H0zM8 7h7v8H8zM0 17h8v7H0zM16 2h8v6h-8z" fill="#22324a" />
      <path d="M8 0h8v7H8zM0 7h8v9H0z" fill="#8eaacb" /><path d="M15 8h9v8h-9z" fill="#536f96" /><path d="M14 0h4v5h-4zM8 16h8v8H8z" fill="#dfe9f5" />
    </g>
  ),
  pseudo: <g><path d="M0 0h24v24H0z" fill="#e8553a" /><path d="M6 0h6v24H6z" fill="#fdb863" /><path d="M11 0h6v24h-6z" fill="#f5f3b0" /><path d="M16 0h7v24h-7z" fill="#7fc8a9" /><rect x="1" y="1" width="22" height="22" fill="none" stroke="#444" strokeWidth="2" /></g>,
  transp: <g><rect x="2.500" y="1.500" width="21" height="16" fill="#b8c6d8" stroke="#e2e4e6" /><path d="M3 2h12L3 16z" fill="#6286bb" /><path d="M9 5l5-1 3 3-3 5-2-3zM17 4l5 1-1 5-3-2z" fill="#8395aa" /><rect x="0" y="0" width="2.500" height="20" fill="#f4f4f4" /><path d="M0 18.500h24v4H0z" fill="#e6e6e6" /><path d="M0 20h24" stroke="#222" strokeDasharray="2 1" strokeWidth="1.500" /></g>,
  histo: <g><rect x="2.500" y="4" width="21" height="14.500" fill="#e9ebec" stroke="#f8f8f8" /><path d="M4 15l4-6 3 4 3-2 3 3 3-3 3 3" fill="none" stroke="#4a6b96" /><rect x="0" y="3" width="3" height="17" fill="#fff" /><path d="M1 19h22" stroke="#fff" strokeWidth="1.500" /></g>,
  attrs: <g><path d="M6.500 5v11H3M17.500 5v11h3M12 8v11" stroke="#d68916" strokeWidth="2.600" fill="none" /><rect x="7" y="0" width="10" height="7" fill="#f04b4b" stroke="#c33" /><rect x="0" y="15.500" width="10.500" height="8" fill="#fbe05a" stroke="#c99b12" /><rect x="13.500" y="15.500" width="10.500" height="8" fill="#a5cdf5" stroke="#5b8fc5" /></g>,
  history: <g><g transform="translate(15 2) scale(-.6 .6)">{curl("#6fae84")}</g><g transform="translate(9 9) scale(.62)">{curl("#e07b35")}</g></g>,
  plus: <path d="M9.500 3h5v6.500h6.500v5h-6.500V21h-5v-6.500H3v-5h6.500z" fill="#fff" stroke="#4a8a58" strokeWidth="2.200" />,
  minus: <rect x="2" y="9" width="20" height="6" fill="#fff" stroke="#ee5257" strokeWidth="2.200" />,
  invert: <g fill="#86bd8e"><path d="M11 8l6-7v3.500c6 1 8 6 5 11-1-4-2-4.500-5-5V14z" /><path d="M13 16l-6 7v-3.500c-6-1-8-6-5-11 1 4 2 4.500 5 5V10z" /></g>,
  folder,
  saveAs: <g>{flop}<rect x="14" y="14" width="10" height="10" rx="1.500" fill="#4f8a5b" /><path d="M16 22l6-6" stroke="#fff" strokeWidth="2" /></g>,
  undoOn: curl("#e87f3c"),
  redoOn: <g transform="translate(24 0) scale(-1 1)">{curl("#79b184")}</g>,
  apply: <path d="M1 12l4-2 3 6C12 8 16 3 22 0l1.500 1C17 8 13 15 10 24H6.500z" fill="#638055" stroke="#475f3c" strokeWidth=".8" />,
  crs: <g fill="none" stroke="#666" strokeWidth="1.300"><path d="M0 13L12 3l12 10-12 9z" fill="#d5d5d5" /><circle cx="12" cy="12" r="9" fill="#bbb" /><path d="M3 12h18M12 3v18M5 7q7 4 14 0M5 17q7-4 14 0M8 4q-3 8 0 16M16 4q3 8 0 16" /></g>,
  bubble: <g fill="#5b5d5f"><path d="M12 2c7 0 11.500 3.500 11.500 8.500 0 3-1.500 5-4 6.500l1.500 5.500-6-3.800C6 19.500.5 16 .5 10.500.5 5.500 5 2 12 2z" /><circle cx="6.500" cy="10.500" r="1.500" fill="#fff" /><circle cx="12" cy="10.500" r="1.500" fill="#fff" /><circle cx="17.500" cy="10.500" r="1.500" fill="#fff" /></g>,
  lock: <g><path d="M6 11V7q0-5 6-5t6 5v4" fill="none" stroke="#a3a49c" strokeWidth="3.200" /><rect x="2" y="10.500" width="20" height="12.500" rx="1.500" fill="#555759" /><path d="M2 14h20M2 18h20" stroke="#6a6c6e" /></g>,
  extents: <g fill="none" stroke="#2b2b2b" strokeWidth="1.800"><path d="M2 3l5-2 6 7-3 5-7-5zM5 8l5-7M8 11l6-8M12 7l7-4M19 3l5 0M2 14l6 3" /><circle cx="15" cy="16" r="6.500" fill="#ddd" /><circle cx="15" cy="16" r="2.500" fill="#fff" /><path d="M9 13l3 8M18 9l3 5" /></g>,
  search: <g fill="none" stroke="#8b8d8f" strokeWidth="2.200"><circle cx="9.500" cy="9" r="7.500" /><path d="M15 15l8 8" /></g>,
  qgis: (
    <g>
      <circle cx="11.500" cy="11.500" r="8.800" fill="none" stroke="#86b32d" strokeWidth="4.800" />
      <path d="M12 12l5 1 6.500 7.500V24H18l-6-7z" fill="#5b9c32" />
      <path d="M9.500 8.500l6 2 1.500 5.500-4-1.500z" fill="#f2a33a" />
      <path d="M14 14l3 3" stroke="#fdf3c0" strokeWidth="2" />
    </g>
  ),
};

const Drawing = styled.svg`
  flex: none;
  overflow: visible;
`;

const Ico = ({ n, s = 24 }) => (
  <Drawing width={s} height={s} viewBox="0 0 24 24">
    {I[n]}
  </Drawing>
);

/* toolbar description: "|" grip, "-" separator, "!" pressed, ">" opens a menu, "~" disabled menu */
const BAR1 = "new open save layoutNew layouts styleMgr | hand! pan zoomIn zoomOut zoomFull zoomSel zoomLayer zoomOne zoomLast zoomNext mapNew map3d bookNew books clock refresh | identify table abacus gear sigma measure> tip action>~ text> | select>~ epsilon>~ deselect> location";
const BAR2 = "addSource gpkg vector feather chip - vlayer - | edits pencil saveEdits addPoint vertex> formEdit trash cut copy paste undo redo | abc pie - abPin abcRed - abcPin abcEye abcMove abcTurn abcEdit | osm | python darkGlobe | help |";
const BAR3 = "quick osmDown | | plot";

const Tools = ({ spec, h, grip = 15.5 }) => (
  <ToolBar $h={h}>
    <GripSlot $first $w={12}><Grip /></GripSlot>
    {spec.split(" ").map((t, i) => {
      if (t === "|") return <GripSlot key={i} $w={grip}><Grip /></GripSlot>;
      if (t === "-") return <ToolSep key={i} />;
      const name = t.replace(/[!>~]/g, "");
      if (t.includes("!")) return <ToolSlot key={i} $active><ActiveTool><Ico n={name} /></ActiveTool></ToolSlot>;
      return (
        <ToolSlot key={i} $menu={t.includes(">")}>
          <Ico n={name} />
          {t.includes(">") && <svg width="12" height="4" viewBox="-6 0 12 4"><path d="M-.5 0h7L3 4z" fill={t.includes("~") ? "#b5b7b8" : "#6c6e70"} /></svg>}
        </ToolSlot>
      );
    })}
  </ToolBar>
);

/* ---------- province map ---------- */

/* survey sheets: north sheet starts at (640,180), south sheet at (560,540), three units per pixel */
const north = (p) => [640 + p[0] / 3, 180 + p[1] / 3];
const south = (p) => [560 + p[0] / 3, 540 + p[1] / 3];
const pairs = (s) => s.trim().split(/\s+/).map((t) => t.split(",").map(Number));

const eastCoast = [
  ...pairs("1305,47 1301,60 1306,70 1281,97 1262,97 1240,94 1232,100 1229,122 1222,132 1225,170 1234,180 1231,207 1245,228 1230,250 1224,280 1234,292 1222,315 1203,340 1204,375 1186,402 1189,432 1164,451 1135,457 1118,480 1114,495 1085,500 1075,507 1073,540 1062,550 1041,558 1040,566 1048,580 1045,620 1038,660 1036,700 1019,723 1038,745 1046,775 1054,787 1037,820 1031,845 1031,868 1022,877 1001,882 1002,892 1016,904 1010,925 1003,942 1022,964 1024,1002 1012,1023 1030,1046 1005,1067 1001,1090 988,1110 961,1131").map(north),
  ...pairs("1198,60 1182,90 1164,110 1148,116 1142,124 1138,155 1128,166 1095,180 1094,186 1103,200 1084,225 1080,238 1057,245 1047,266 1014,270 1010,280 1013,295 985,312 962,328 925,331 900,345 899,358 886,370 893,402 890,410 868,430 892,460 877,485 877,505 886,523 883,557 869,563 868,610 848,628 859,643 857,668 868,688 871,728 892,748 882,764 907,790 912,812 948,855 988,878 1018,874 1030,882 1025,893 1040,908 1030,928 1016,938 1010,962 984,980 978,1015 966,1022 964,1042 942,1047 905,1040 885,1025 852,1023 833,1009 810,1012 797,1025 794,1047").map(south),
];
const westRiver = pairs("426,854 436,850 475,812 481,774 475,765 479,745 472,725 449,697 419,691 418,682 438,664 427,657 434,648 424,640 429,625 420,605 398,575 386,540 345,513 326,487 335,437 327,408 316,397 317,345 309,330 352,298").map(south);

const spline = (pts) =>
  pts
    .slice(1)
    .map((p, i) => {
      const a = pts[i];
      const b = pts[i - 1] || a;
      const n = pts[i + 2] || p;
      const k = 7;
      return `C${a[0] + (p[0] - b[0]) / k},${a[1] + (p[1] - b[1]) / k} ${p[0] - (n[0] - a[0]) / k},${p[1] - (n[1] - a[1]) / k} ${p[0]},${p[1]}`;
    })
    .join("");

const outline = `M727.700,195.500L${eastCoast[0]}${spline(eastCoast)}L${south([503, 1318])}L${south([75, 1318])}L${westRiver[0]}${spline(westRiver)}L${north([215, 1057])}L${north([109, 960])}Z`;

const settlements = [
  ["#440154", north, "457,51 457,93 331,126 295,273 217,328 217,331 439,360 265,390 238,498 241,495 241,498 244,498 241,501 247,519 211,600 190,729 160,747 235,744 172,738 175,735 178,735 178,738 175,738 178,741 421,741 340,780 217,783 445,786 448,786 160,834 205,846 202,861 256,867 163,882 139,891 436,895 439,895 442,895 436,898 187,915 193,912 214,912 208,930 445,912 157,942 589,918 202,960 172,979 172,982 322,978 616,960 619,981 199,999 502,1035 508,1038 442,1092 538,1101 478,1131 565,1131 628,1065"],
  ["#3b528b", north, "913,123 868,294 607,462 697,498 790,486 745,516 514,540 760,555 814,580 817,580 814,583 817,583 820,586 754,627 802,669 808,669 685,738 787,738 790,741 787,741 790,744 712,840 709,864 685,870 745,915 721,996 715,1026 673,1072 676,1072 679,1072 673,1075 676,1075 886,1044 652,1116 880,1107 616,1122 652,1128 772,369 952,291"],
  ["#21918c", north, "1171,60 1180,60 1171,96 1093,135 1162,159 1168,171 1165,183 1159,195 1168,198 1129,204 1096,216 1117,225 1126,222 1126,225 1132,222 1135,219 1135,222 1135,225 1132,225 1108,237 1036,225 1072,273 1036,309 1087,312 1102,306 1042,339 1030,354 1015,360 1063,366 1072,357 1078,357 1000,390 949,399 1021,405 1036,435 1039,438 1024,441 1018,453 1021,456 1024,453 1021,459 1009,468 1015,465 1015,468 1018,468 1021,465 1024,465 1027,465 1018,471 1021,468 1021,471 1024,471 1027,471 1027,468 1018,474 1021,474 1024,474 1021,477 1024,477 1018,465 1030,468 1021,480 1024,468 997,495 1015,492 979,513 1003,516 904,540 907,540 904,543 907,543 907,537 886,582 985,597 988,600 988,594 907,642 943,639 979,642 958,747 844,948 886,951 859,987 916,994 919,994 922,994 916,997 322,1074 385,1077 325,1098 349,1110 391,1101 394,1101 397,1104 208,1131 223,1131 235,1128 256,1131 316,1125 316,1128 319,1131 322,1128"],
  ["#21918c", south, "565,19 589,31 631,22 634,22 637,25 556,46 556,49 559,52 562,49 448,51 463,51 475,48 496,52 490,63 508,67 517,97 571,109 424,115 427,136 445,154 442,178 418,172 490,142 533,136 538,154 598,118 583,158 586,161 580,161 583,161 577,161 583,164 577,164 580,167 586,158 589,155 589,158 592,164 604,167 613,175 577,170 463,196 550,184 541,205 568,211 577,241 391,214 400,220 373,232 373,235 436,277 499,265 421,298 541,298 562,274 556,328 559,331 490,319 490,325 487,322 841,655 856,673 841,685 844,691 853,703 859,706 853,709 856,709 856,712 859,712 859,715 862,712 862,715 859,718 865,727 868,730 871,730 871,742 868,739 862,721 850,715 865,709 808,772 811,778 805,778 808,787 811,784 799,730 781,850 778,847 706,754 709,757 712,757 721,760 754,766 757,766 751,815 748,814 1006,892 1009,892 1012,892 1006,895 1009,895 1012,895 1009,898 1012,898 1021,901 994,904 994,907 738,874 745,886 745,925 841,970 904,967 901,970 781,988 838,1009 718,1009 718,1012"],
  ["#26838f", south, "697,826 700,829 703,823 706,826 709,823 694,829 472,838 475,844 505,850 508,853 445,841 487,874 541,862 595,862 592,865 643,847 658,865 505,898 523,904 541,913 631,898 634,901 484,928 502,943 502,946 610,934 697,946 382,928 385,943 367,970 364,973 454,958 583,976 586,979 583,982 589,979 646,976 490,1033 541,1030 448,1045 649,1030 658,1054 595,1054 538,1066 640,1060 652,1069 304,1075 307,1078 298,1102 304,1120 397,1075 400,1078 403,1075 403,1081 406,1078 406,1081 409,1081 409,1084 406,1084 409,1087 412,1084 412,1087 415,1084 418,1084 418,1087 403,1090 412,1090 406,1093 415,1081 418,1114 361,1132 469,1123 508,1136 640,1099 643,1105 688,1100 661,1120 307,1180 310,1183 424,1186 433,1180 538,1177 541,1180 544,1183 541,1183 241,1228 526,1228 199,1258 550,1252 568,1247 571,1247 574,1247 571,1250 589,1231 445,1264 130,1270 133,1273 136,1273 136,1276 136,1279 139,1276 133,1276 382,1297 382,1300 451,1303 349,1316"],
  ["#440154", south, "682,13 778,22 718,52 805,52 799,76 778,109 754,118 808,115 835,112 715,127 721,136 706,142 685,151 688,163 724,157 751,169 790,151 790,181 661,193 649,202 712,193 736,211 739,217 733,220 670,232 664,235 697,250 784,234 787,234 790,234 787,237 790,231 790,237 787,240 790,240 793,240 787,243 793,229 796,243 790,259 832,271 706,274 736,274 739,277 736,277 700,286 712,295 667,298 787,289 787,292 799,295 817,313 787,322 781,331 739,319 589,292 730,340 733,343 730,349 727,352 649,352 646,355 457,355 460,355 556,388 553,388 556,391 601,391 445,403 448,406 445,409 376,433 370,439 427,448 475,457 475,460 544,460 547,460 394,484 397,487 403,493 403,529 565,487 502,514 505,514 505,511 508,517 505,517 433,538 571,547 568,550"],
  ["#31578c", south, "769,397 814,385 679,409 718,409 661,406 718,436 745,415 769,424 796,427 796,433 790,433 793,439 682,450 685,453 688,453 691,456 685,450 748,511 775,526 793,529 694,529 655,541 652,550 613,547 613,550 634,550 811,562 733,577 775,595 631,576 634,579 640,573 643,576 634,582 439,589 550,616 553,616 556,619 832,598 832,601 808,607 808,610 817,619 469,649 484,649 574,691 571,697 577,694 463,715 541,727 544,733 526,724 553,748 1120,28 856,43 892,37 892,49 1099,85 1099,94 1102,106 1081,142 1075,145 985,244 1012,223 1033,190 1084,139"],
  ["#43307c", south, "658,610 673,616 673,628 634,643 757,628 700,658 703,658 706,655 691,658 718,652 784,664 787,664 787,667 829,667 832,673 757,703 646,706 655,712 640,745 613,738 616,741 619,741 622,744 619,744 673,751 670,754 565,796 562,796 613,784 652,793"],
  ["#fde725", south, "859,94 835,151 853,169 853,172 892,181 889,184 892,187 859,211 907,229 919,232 865,238 862,253 910,250 883,262 883,265 949,271 943,277 1009,289 943,325 916,295 910,304 913,304 892,304 847,304 844,307 862,283 871,280 868,286 874,283 877,286 880,283 883,286 886,289 871,289 874,289 877,289 880,289 874,292 877,292 880,292 883,292 871,295 877,295 880,295 886,292 889,292 868,298 877,298 880,298 874,301 877,301 880,304 862,298 865,304 865,310 859,313 862,313 856,316 853,319 850,316 847,319 853,322 847,322 844,322 838,316 829,316 844,325 847,328 844,334 871,313 877,313 877,307 880,307 835,340 832,346 829,352 826,355 823,358 880,280 889,295"],
  ["#5ec962", south, "814,778 817,781 823,781 826,784 829,781 832,784 835,787 829,787 835,781 838,781 841,769 838,784 847,778 850,775 853,775 856,778 859,775 862,775 865,772 868,769 859,784 862,781 856,787 865,778 868,778 871,775 868,763 868,757 874,754 871,760 865,766 862,760 874,763 877,766 877,772 880,769 880,778 877,781 874,784 880,784 883,781 886,778 883,775 889,781 883,787 880,790 877,787 874,793 880,796 883,793 886,790 889,787 892,784 892,790 895,787 898,790 886,796 889,793 892,796 895,793 898,796 901,793 904,796 883,802 886,802 889,799 892,802 895,799 898,802 901,799 880,805 883,808 889,805 892,808 895,805 898,808 901,805 904,802 904,808 907,805 889,811 892,814 895,811 901,811 904,814 907,811 907,817 904,820 907,823 898,817 895,820 886,817 880,820 874,802 868,799 862,796 859,802 850,808 847,811 811,817 871,811 922,826 925,832 922,841 925,838 928,841 925,844 928,847 919,838 931,838 940,853 955,862 958,868 964,871 961,880 907,871 874,844 877,847 874,856 871,856 844,841 841,850 838,856 835,859 841,847 802,874 877,904 874,907 778,907 952,859 868,787 871,790 877,790 871,781 868,784 874,775 886,784 889,790 892,799 895,796 886,808 898,811 892,793 889,796 895,790 898,799 901,802 889,802 895,808 901,808 871,784 865,781 868,775 874,778"],
];

const pixels = (place, s) =>
  pairs(s)
    .map((p) => {
      const [x, y] = place(p);
      return `M${Math.floor(x)} ${Math.floor(y)}h1v1h-1z`;
    })
    .join("");

const ProvinceMap = () => (
  <svg width="1088" height="823" viewBox="286 176 1088 823">
    <path d={outline} fill="#faefea" stroke="#2c2a29" strokeWidth="1" strokeLinejoin="round" />
    <g shapeRendering="crispEdges">
      {settlements.map(([c, place, s], i) => <path key={i} d={pixels(place, s)} fill={c} />)}
    </g>
  </svg>
);

/* ---------- application ---------- */

const MENUS = [
  ["Pro", "y", "ecto", 76], ["", "E", "dición", 65], ["", "V", "er", 38], ["", "C", "apa", 50], ["Con", "f", "iguración", 113],
  ["Co", "m", "plementos", 122], ["Vect", "o", "rial", 76], ["", "R", "áster", 60], ["Base de ", "d", "atos", 112],
  ["", "W", "eb", 46.5], ["", "M", "alla", 53], ["Pro", "c", "esos", 78], ["A", "y", "uda", 60],
];

const CLASSES = [
  ["1,90126...", "#440154", "1,9013"],
  ["2,25851...", "#3b528b", "2,2585"],
  ["2,78998...", "#21918c", "2,7900"],
  ["8,01839...", "#5ec962", "8,0184"],
  ["8,66034...", "#fde725", "8,6603"],
];

export default function App() {
  return (
    <Window>
      <Global />
      <TitleBar>
        <Ico n="qgis" s={21} />
        <span>*modulo4 — QGIS</span>
        <WindowButtons>
          <svg width="66" height="19" viewBox="0 0 66 19" fill="none" stroke="#fcfcfc" strokeWidth="1.200">
            <path d="M4.500 7l5 5 5-5M28.500 9.500l5-5 5 5-5 5z" />
            <circle cx="57" cy="9.500" r="9" fill="#fcfcfc" stroke="none" />
            <path d="M52.500 5l9 9M61.500 5l-9 9" stroke="#475057" strokeWidth="1.400" />
          </svg>
        </WindowButtons>
      </TitleBar>
      <MenuBar>
        {MENUS.map(([a, u, b, w]) => <MenuEntry key={a + u + b} $w={w}>{a}<u>{u}</u>{b}</MenuEntry>)}
      </MenuBar>
      <Tools spec={BAR1} grip={16} />
      <Tools spec={BAR2} />
      <Tools spec={BAR3} h={38} grip={16.75} />

      <Main>
        <LeftDock>
          <DockTitle $r={4}><span>Capas</span><Float /><Close /></DockTitle>
          <LayerTools>
            <LayerToolOn><Ico n="brush" s={16} /></LayerToolOn>
            <LayerTool><Ico n="addGroup" s={16} /></LayerTool>
            <LayerTool><Ico n="eye" s={17} /></LayerTool>
            <LayerTool><Ico n="funnel" s={17} /></LayerTool>
            <LayerTool><Ico n="epsFunnel" s={15} /></LayerTool>
            <LayerTool $w={8}><Tri c="#b5b7b8" s={7} /></LayerTool>
            <LayerTool $w={30}><Ico n="expand" s={16} /></LayerTool>
            <LayerTool $w={22}><Ico n="collapse" s={16} /></LayerTool>
            <LayerTool $w={26}><Ico n="removeLayer" s={15} /></LayerTool>
          </LayerTools>
          <Tree>
            <LayerRow>
              <Expander><Tri s={8} /></Expander>
              <Box><Check /></Box>
              <LayerIcon $l={2}><Ico n="raster" s={13} /></LayerIcon>
              <SelectedName>HRSL_SantaFe_poblacion</SelectedName>
            </LayerRow>
            <BandName>Banda 1 (Gray)</BandName>
            <Legend>
              <LegendRamp />
              <LegendLabels><span>8,660345</span><span>1,901265</span></LegendLabels>
            </Legend>
            <LayerRow $h={26}>
              <Expander />
              <Box><Check /></Box>
              <LayerIcon><Swatch /></LayerIcon>
              <LayerName>limite_provincial_santafe</LayerName>
            </LayerRow>
          </Tree>
          <Tabs $mt={1}>
            <Tab $w={102}>Navegador</Tab>
            <Tab $w={67} $on>Capas</Tab>
          </Tabs>
        </LeftDock>
        <Splitter><Grip h={18} one /></Splitter>
        <Canvas><ProvinceMap /></Canvas>
        <RightDock>
          <DockTitle $l={10} $r={2.5}><span>Estilo de capas</span><Float /><Close /></DockTitle>
          <Combo $w={533} $pl={7} $ml={9}><Ico n="raster" s={13} /><span>HRSL_SantaFe_poblacion</span><Tri /></Combo>
          <StyleBody>
            <StyleSide>
              <SideFirst><Ico n="brushPale" s={23} /></SideFirst>
              <SideDark>
                <Ico n="transp" s={22} />
                <Ico n="histo" s={22} />
                <Ico n="attrs" s={23} />
                <Ico n="history" s={24} />
              </SideDark>
            </StyleSide>
            <StyleColumn>
              <ScrollArea>
                <Form>
                  <Combo $w={478} $pl={7}><Ico n="pseudo" s={12} /><Fill $l={1}>Pseudocolor monobanda</Fill><Tri /></Combo>
                  <FormRow $mt={9}><Label $w={91}>Banda</Label><Combo $w={381}><span>Banda 1 (Gray)</span><Tri /></Combo></FormRow>
                  <FormRow $mt={6}>
                    <Label $w={91}>Mín</Label><Field $w={142} $end>9012653944146192</Field>
                    <Fill $l={6}>Máx</Fill><Field $w={142} $end>6603451795896014</Field>
                  </FormRow>
                  <BoldRow $h={40} $mt={0}>
                    <Label $w={22.5}><svg width="13" height="11" viewBox="0 0 13 11"><path d="M5 0v11l7-5.500z" fill="#232629" /></svg></Label>
                    Configuración de valores mín/máx
                  </BoldRow>
                  <FormRow $mt={0}><Label $w={161}>Interpolación</Label><Combo $w={311}><span>Lineal</span><Tri /></Combo></FormRow>
                  <FormRow $mt={6}>
                    <Label $w={161}>Rampa de color</Label>
                    <RampField $w={299}><Ramp /></RampField>
                    <Button $w={12}><Tri s={7} /></Button>
                  </FormRow>
                  <FormRow $mt={6}><Label $w={161}>Label unit suffix</Label><Field $w={311} /></FormRow>
                  <FormRow $mt={6}>
                    <Label $w={161}>Label precision</Label>
                    <SpinBox $w={311}><span>4</span><Clear /><Spin ml={11} /></SpinBox>
                  </FormRow>
                  <ClassTable>
                    <ClassHead><span>Valor</span><span>Color</span><span>Etiqueta</span></ClassHead>
                    {CLASSES.map(([v, c, l]) => <ClassRow key={v}><span>{v}</span><ClassColor $c={c} /><span>{l}</span></ClassRow>)}
                  </ClassTable>
                  <FormRow $mt={6}>
                    <Label $w={47}>Modo</Label><Combo $w={129}><span>Cuantil</span><Tri /></Combo>
                    <Fill /><Label $w={51}>Clases</Label>
                    <SpinBox $w={78}><span>5</span><Clear /><Spin ml={11} /></SpinBox>
                  </FormRow>
                  <ButtonRow $mt={7}>
                    <Button $w={80}>Clasificar</Button>
                    {["plus", "minus", "invert", "folder", "saveAs"].map((n) => <Button key={n} $w={28} $h={25}><Ico n={n} s={16} /></Button>)}
                    <Fill /><Button $w={134}>Legend Settings...</Button>
                  </ButtonRow>
                  <FormRow $mt={5}><Box /><Fill $l={4.5}>Corte fuera de valores del intervalo</Fill></FormRow>
                  <BoldRow $mt={11} $h={22} $l={2}>Representación de capas</BoldRow>
                  <GroupTop />
                </Form>
                <ScrollBar>
                  <ScrollButton $up><Tri up s={7} /></ScrollButton>
                  <ScrollHandle />
                  <ScrollButton><Tri s={7} /></ScrollButton>
                </ScrollBar>
              </ScrollArea>
              <StyleFooter>
                <Button $w={24} $h={24}><Ico n="undoOn" s={14} /></Button>
                <Button $w={24} $h={24}><Ico n="redoOn" s={14} /></Button>
                <Fill />
                <Box><Check /></Box>
                <Label $w={154}>Actualización en vivo</Label>
                <Button $w={80}><Ico n="apply" s={16} /><span><u>A</u>plicar</span></Button>
              </StyleFooter>
            </StyleColumn>
          </StyleBody>
          <Tabs $mt={4} $l={5.5}>
            <Tab $w={129} $on>Estilo de capas</Tab>
            <Tab $w={262}>Caja de herramientas de Procesos</Tab>
          </Tabs>
        </RightDock>
      </Main>

      <StatusBar>
        <Locator $w={358} $pl={8} $muted><Ico n="search" s={13} /><span>Escriba para localizar (Ctrl+K)</span></Locator>
        <StatusText $w={604.5} $l={8} $dark $t={1}>Eliminada una entrada de la leyenda.</StatusText>
        <StatusText $w={72.5} $t={1}>Coordenada</StatusText>
        <Field $w={103} $h={26} $pl={7}>-56.759,-30.112</Field>
        <StatusText $w={33} $l={4}><Ico n="extents" s={16} /></StatusText>
        <StatusText $w={38} $t={1}>Escala</StatusText>
        <SpinBox $w={104} $h={30}>
          <span>1:2230371</span>
          <SpinArrows $w={21}><Tri /></SpinArrows>
        </SpinBox>
        <StatusText $w={33} $l={11}><Ico n="lock" s={15} /></StatusText>
        <StatusText $w={75} $t={1}>Amplificador</StatusText>
        <SpinBox $w={99}><span>100%</span><Spin /></SpinBox>
        <StatusText $w={68} $l={10} $t={1}>Rotación</StatusText>
        <SpinBox $w={95} $h={28}><span>0,0 °</span><Spin /></SpinBox>
        <Box $ml={6}><Check /></Box>
        <StatusText $w={89} $l={5} $t={1}>Representar</StatusText>
        <Ico n="crs" s={16} />
        <StatusText $w={84} $l={2.5} $t={1}>EPSG:4326</StatusText>
        <Ico n="bubble" s={17} />
      </StatusBar>
    </Window>
  );
}
